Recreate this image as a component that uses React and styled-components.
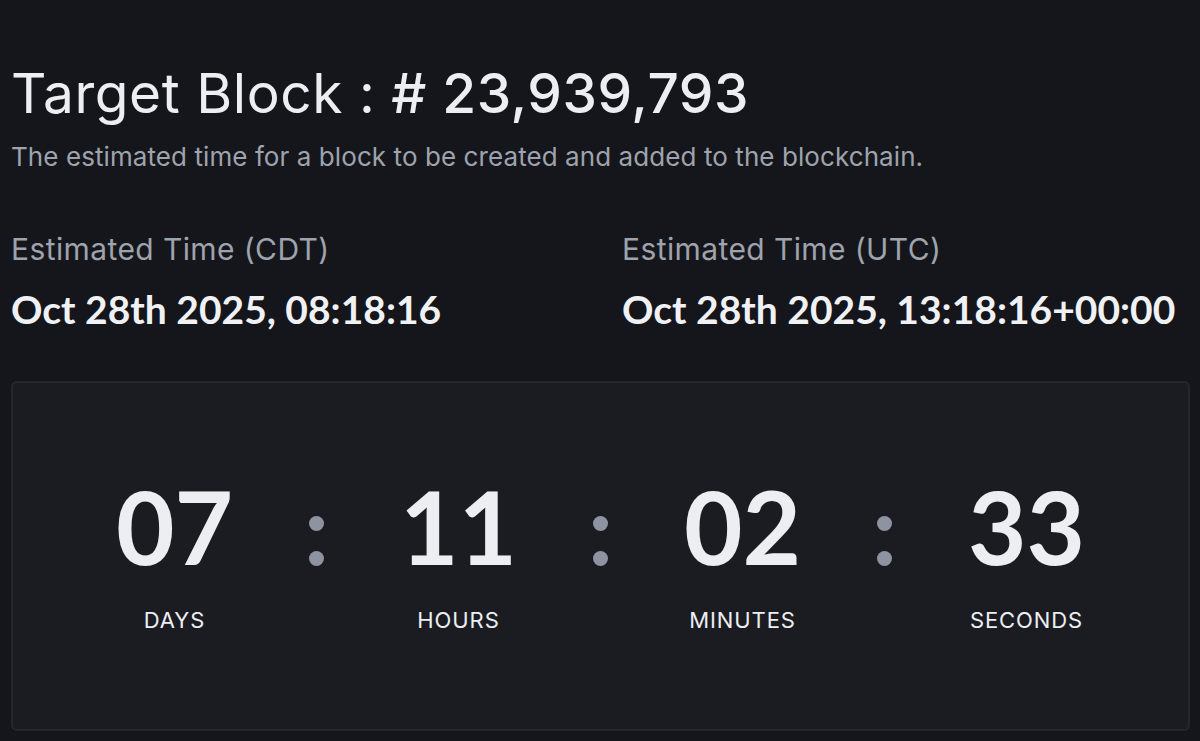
import React from "react";
import styled, { createGlobalStyle } from "styled-components";

const Global = createGlobalStyle`
  html, body { margin: 0; padding: 0; background: #15161b; }
  body { font-family: Inter, Roboto, "Liberation Sans", sans-serif; color: #ecedf0; }
  * { box-sizing: border-box; }
`;

const Page = styled.div`
  width: 1200px;
  height: 741px;
  overflow: hidden;
  padding: 60px 10px 0 11px;
  background: #15161b;
`;

const Title = styled.h1`
  margin: 0;
  font-family: Inter, Roboto, sans-serif;
  font-weight: 400;
  font-size: 55px;
  line-height: 66px;
  color: #eceef2;
  letter-spacing: 0.55px;
`;

const Num = styled.span`
  font-weight: 500;
`;

const Subtitle = styled.p`
  margin: 15px 0 0;
  font-size: 26px;
  line-height: 32px;
  color: #9ea3ad;
  letter-spacing: 0.08px;
`;

const Times = styled.div`
  display: grid;
  grid-template-columns: 611px 1fr;
  margin-top: 58px;
`;

const TimeBlock = styled.div`
  display: flex;
  flex-direction: column;
  gap: 19px;
`;

const TimeLabel = styled.div`
  font-size: 30px;
  line-height: 36px;
  color: #9ea3ad;
  letter-spacing: 0.4px;
`;

const TimeValue = styled.div`
  font-family: Lato, "Noto Sans", sans-serif;
  font-weight: 700;
  font-size: 39px;
  line-height: 46px;
  color: #f0f1f4;
`;

const Card = styled.div`
  margin-top: 49px;
  height: 350px;
  background: #1b1c21;
  border: 2px solid #26272d;
  border-radius: 6px;
  display: flex;
  justify-content: center;
  align-items: flex-start;
  padding-top: 93px;
`;

const Unit = styled.div`
  width: 200px;
  display: flex;
  flex-direction: column;
  align-items: center;
`;

const Digits = styled.div`
  font-family: Lato, "Noto Sans", sans-serif;
  font-weight: 700;
  font-size: 101px;
  line-height: 100px;
  color: #eceef2;
`;

const UnitLabel = styled.div`
  margin-top: 31px;
  font-size: 22px;
  line-height: 26px;
  color: #eceef2;
  text-transform: uppercase;
  letter-spacing: 0.9px;
`;

const Colon = styled.div`
  width: 24px;
  margin: 0 30px;
  height: 100px;
  display: flex;
  flex-direction: column;
  align-items: center;
  justify-content: flex-end;
  gap: 20px;
  padding-bottom: 10px;
`;

const Dot = styled.span`
  width: 15px;
  height: 15px;
  border-radius: 50%;
  background: #8d93a0;
`;

const units = [
  ["07", "Days"],
  ["11", "Hours"],
  ["02", "Minutes"],
  ["33", "Seconds"],
];

export default function App() {
  return (
    <>
      <Global />
      <Page>
        <Title>
          Target Block : <Num># 23,939,793</Num>
        </Title>
        <Subtitle>The estimated time for a block to be created and added to the blockchain.</Subtitle>
        <Times>
          <TimeBlock>
            <TimeLabel>Estimated Time (CDT)</TimeLabel>
            <TimeValue>Oct 28th 2025, 08:18:16</TimeValue>
          </TimeBlock>
          <TimeBlock>
            <TimeLabel>Estimated Time (UTC)</TimeLabel>
            <TimeValue>Oct 28th 2025, 13:18:16+00:00</TimeValue>
          </TimeBlock>
        </Times>
        <Card>
          {units.map(([v, l], i) => (
            <React.Fragment key={l}>
              {i > 0 && (
                <Colon>
                  <Dot />
                  <Dot />
                </Colon>
              )}
              <Unit>
                <Digits>{v}</Digits>
                <UnitLabel>{l}</UnitLabel>
              </Unit>
            </React.Fragment>
          ))}
        </Card>
      </Page>
    </>
  );
}
